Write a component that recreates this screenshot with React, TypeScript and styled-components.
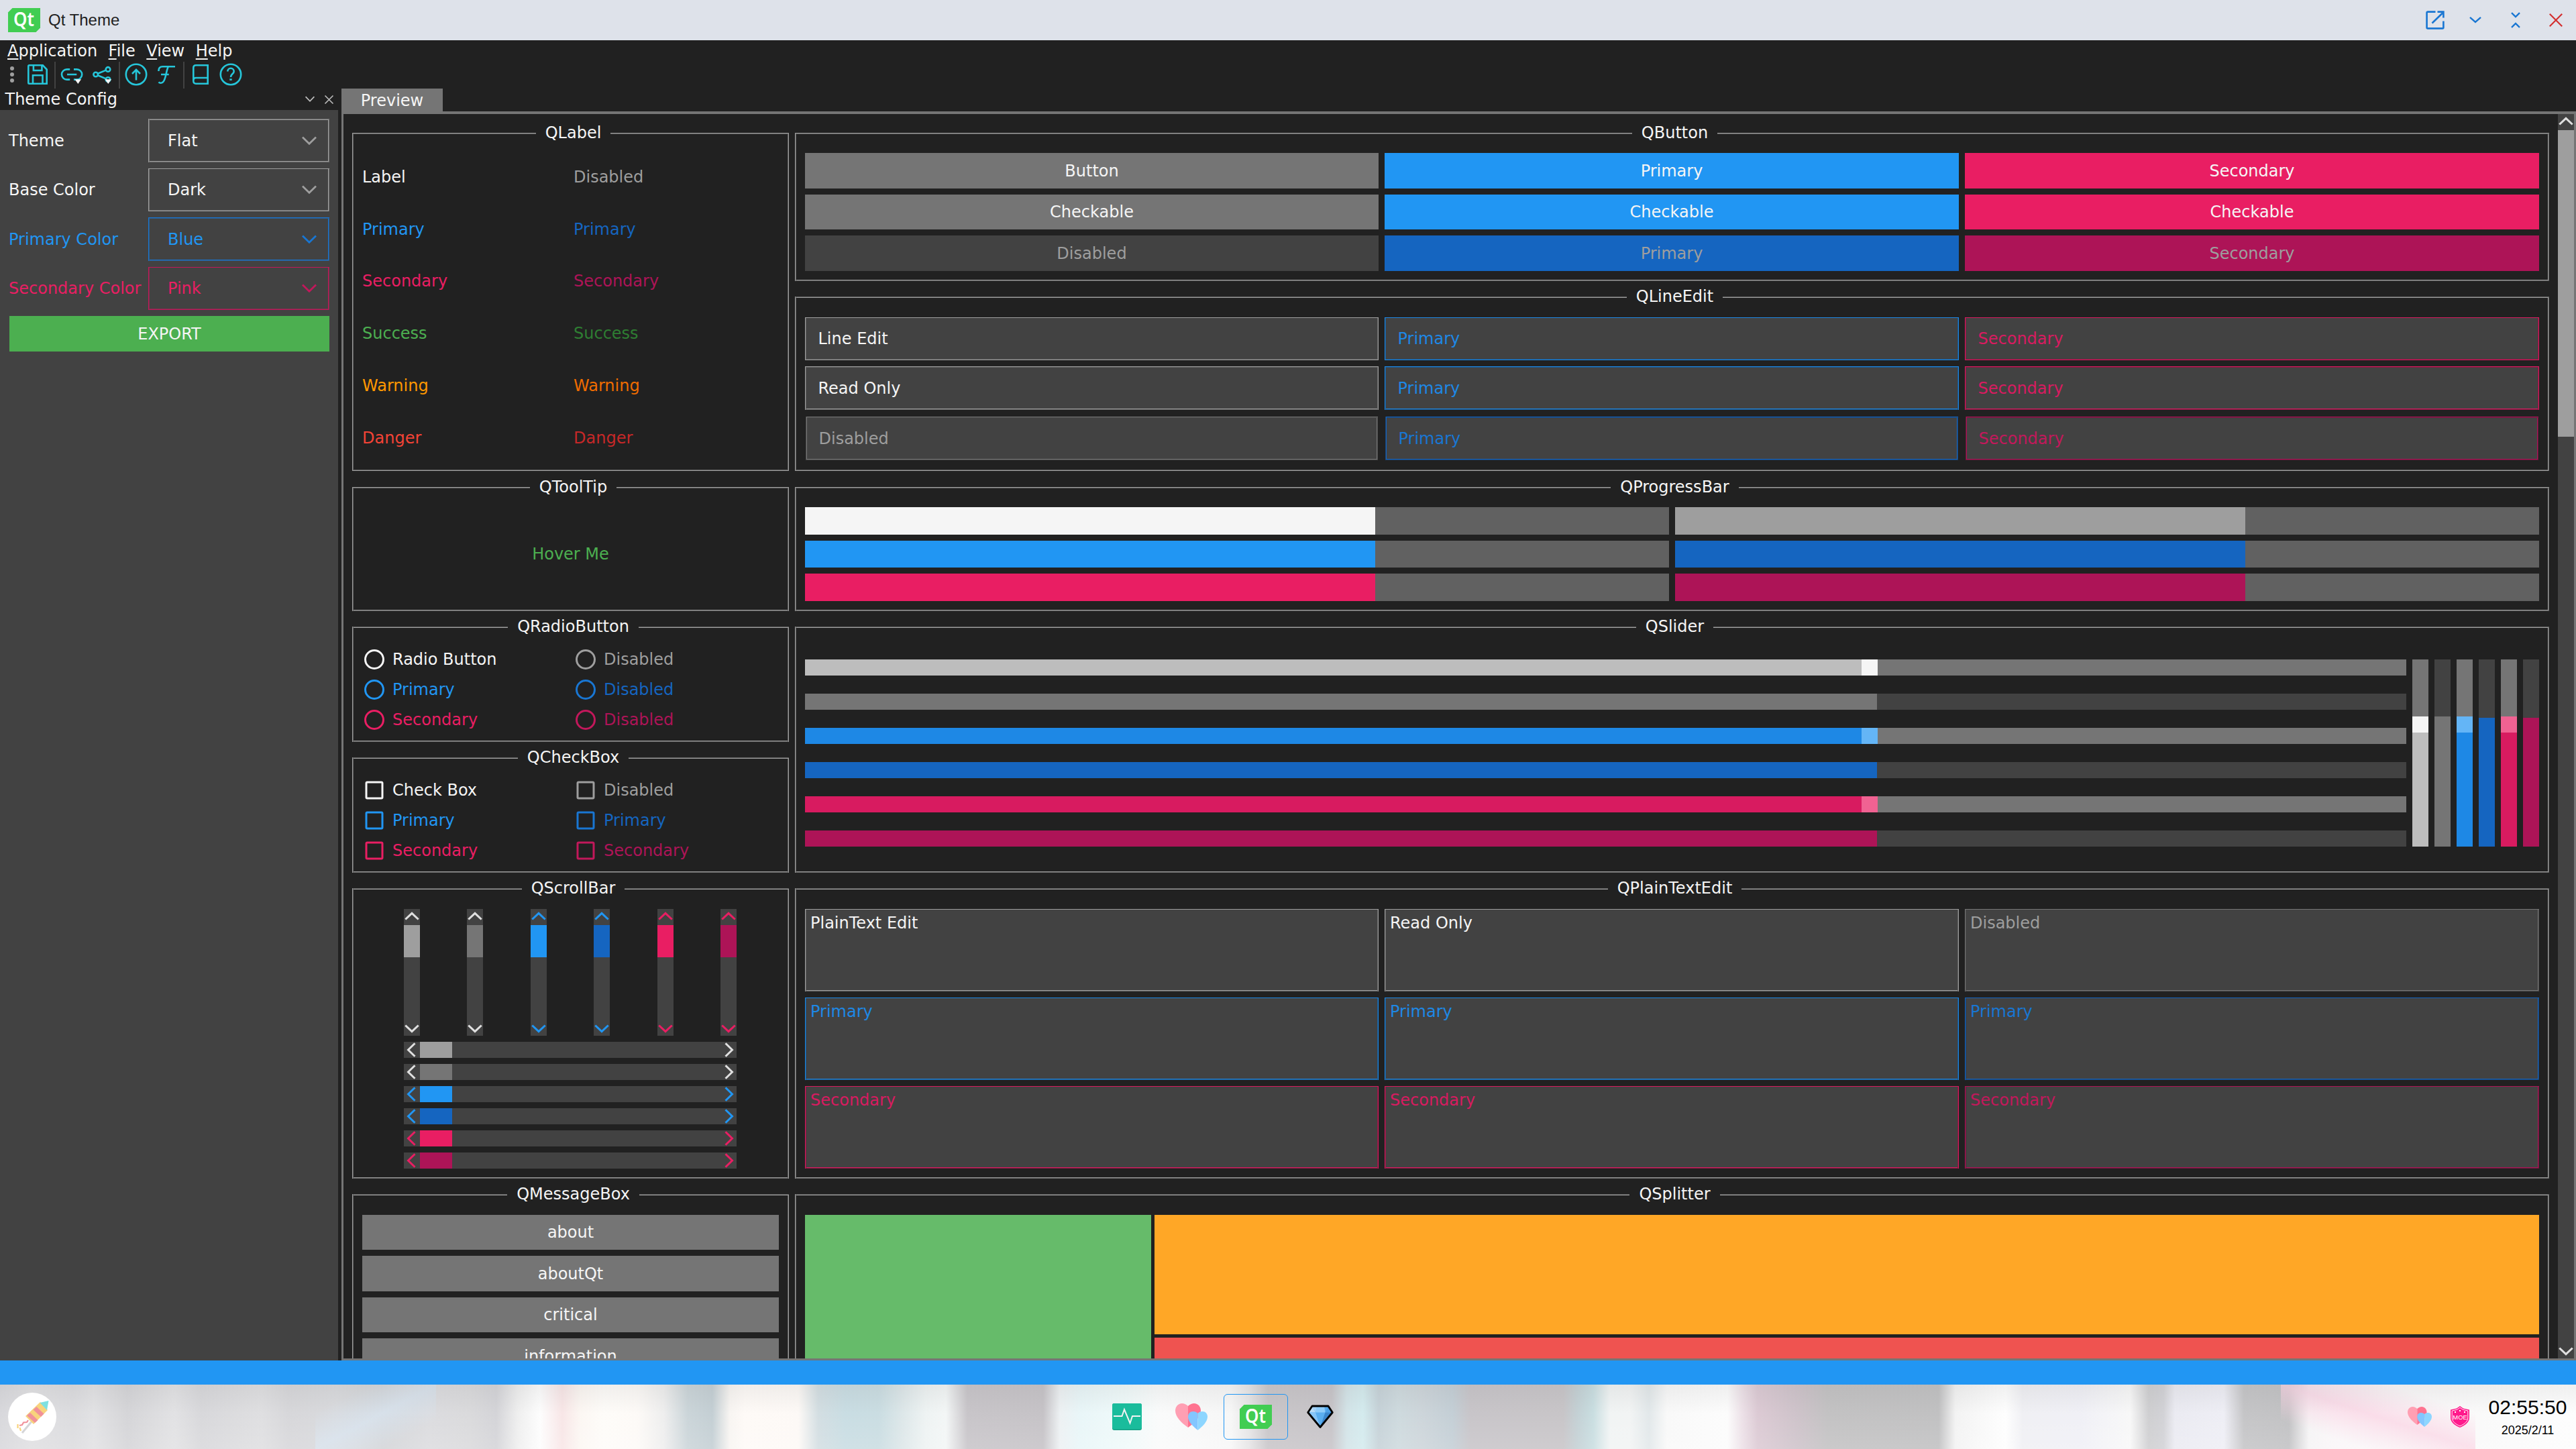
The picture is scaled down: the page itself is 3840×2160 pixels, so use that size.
import React from "react";
import styled, { createGlobalStyle, css } from "styled-components";

const c = {
  bg: "#212121",
  panel: "#424242",
  line: "#9e9e9e",
  grey: "#757575",
  text: "#f5f5f5",
  blue: "#2196f3",
  blueEdit: "#1e88e5",
  blueIcon: "#1976d2",
  blueDark: "#1565c0",
  pink: "#e91e63",
  pinkEdit: "#d81b60",
  pinkIcon: "#c2185b",
  pinkDark: "#ad1457",
  cyan: "#26c6da",
};

/* A hairline of one and a half pixels. Each edge (left, top, right, bottom) is
   "a": solid outside and faint inside, "b": the reverse, "c": one solid pixel. */
type Edges = string;
const hairline = (color: string, edges: Edges, under: string) => {
  const dim = `color-mix(in srgb, ${color} 50%, ${under})`;
  const dirs: [number, number][] = [[1, 0], [0, 1], [-1, 0], [0, -1]];
  const outer: string[] = [];
  const inner: string[] = [];
  dirs.forEach(([x, y], i) => {
    const kind = edges[i];
    outer.push(`inset ${x}px ${y}px 0 0 ${kind === "b" ? dim : color}`);
    if (kind !== "c") inner.push(`inset ${x * 2}px ${y * 2}px 0 0 ${kind === "b" ? color : dim}`);
  });
  return css`box-shadow: ${[...outer, ...inner].join(", ")};`;
};

const Global = createGlobalStyle`
  * { box-sizing: border-box; }
  body {
    margin: 0;
    background: ${c.bg};
    font-family: "DejaVu Sans", sans-serif;
    font-size: 24px;
    line-height: 28px;
    color: ${c.text};
    overflow: hidden;
  }
  svg { display: block; flex: none; overflow: visible; }
`;

const Screen = styled.div`
  width: 3840px;
  height: 2160px;
  display: flex;
  flex-direction: column;
  overflow: hidden;
  white-space: nowrap;
`;

/* ---------- title bar ---------- */
const TitleBar = styled.header`
  height: 60px;
  flex: none;
  display: flex;
  align-items: center;
  padding-left: 12px;
  background: #dee2ea;
  color: #212121;
  font-family: "Liberation Sans", Arial, sans-serif;
`;
const WindowTitle = styled.span`
  flex: 1;
  padding-left: 12px;
`;
const WindowButton = styled.span<{ $danger?: boolean }>`
  width: 60px;
  height: 60px;
  display: flex;
  align-items: center;
  justify-content: center;
  color: ${(p) => (p.$danger ? "#d32f2f" : "#1976d2")};
`;

const QtLogo = () => (
  <svg width="48" height="36" viewBox="0 0 48 36">
    <path d="M6.500 0H48V29.500L41.500 36H0V6.500Z" fill="#41cd52" />
    <text x="8" y="27" textLength="31" lengthAdjust="spacingAndGlyphs" fontFamily="'Noto Sans', 'Open Sans', sans-serif" fontWeight="600" fontSize="28" fill="#fff">Qt</text>
  </svg>
);

/* ---------- menu and tool bar ---------- */
const MenuBar = styled.nav`
  height: 32px;
  flex: none;
  display: flex;
  align-items: center;
  gap: 16.500px;
  padding-left: 11px;
`;
const Mnemonic = styled.span`
  text-decoration: underline;
  text-decoration-thickness: 2px;
  text-underline-offset: 3px;
  text-decoration-skip-ink: none;
`;
const ToolBar = styled.div`
  height: 40px;
  flex: none;
  display: flex;
  align-items: center;
  padding-bottom: 2px;
  color: ${c.cyan};
`;
const Grip = styled.span`
  width: 33.500px;
  display: flex;
  flex-direction: column;
  align-items: center;
  gap: 3px;
  padding-left: 2.500px;
`;
const GripDot = styled.span`
  width: 6px;
  height: 6px;
  border-radius: 50%;
  background: ${c.line};
`;
const ToolButton = styled.span`
  width: 45px;
  display: flex;
  justify-content: center;
`;
const ToolSeparator = styled.span`
  width: 2px;
  height: 40px;
  margin: 2px 1.500px 0 2.500px;
  background: ${c.panel};
`;
const ToolIcon = ({ children, menu }: { children: React.ReactNode; menu?: boolean }) => (
  <svg width="36" height="36" viewBox="0 0 36 36" fill="none" stroke="currentColor" strokeWidth="2.600">
    {children}
    {menu && <path d="M22.500 25.300H32L27.300 32Z" fill="#f5f5f5" stroke="none" />}
  </svg>
);

/* ---------- body ---------- */
const Body = styled.div`
  height: 1896px;
  flex: none;
  display: flex;
`;
const Dock = styled.aside`
  width: 504px;
  display: flex;
  flex-direction: column;
`;
const DockTitle = styled.div`
  height: 32px;
  display: flex;
  align-items: center;
  padding-left: 7.500px;
  margin-right: -1px;
  color: ${c.text};
`;
const DockName = styled.span`
  flex: 1;
`;
const DockIcon = styled.span`
  width: 29px;
  display: flex;
  justify-content: center;
  color: #bdbdbd;
`;
const DockBody = styled.div`
  flex: 1;
  background: ${c.panel};
  padding: 13px 13px 0 14px;
`;
const FormRow = styled.div<{ $h: number; $color: string }>`
  height: ${(p) => p.$h}px;
  margin-bottom: 9px;
  display: grid;
  grid-template-columns: 207px 270px;
  align-items: center;
  color: ${(p) => p.$color};
`;
const FormLabel = styled.span`
  margin-left: -1px;
`;
const Combo = styled.div<{ $line: string; $edges: Edges }>`
  height: 100%;
  display: flex;
  align-items: center;
  justify-content: space-between;
  padding: 0 19px 0 29px;
  ${(p) => hairline(p.$line, p.$edges, c.panel)}
`;
const ChevronIcon = styled.svg<{ $color: string }>`
  color: ${(p) => p.$color};
`;
const ExportButton = styled.div`
  height: 53px;
  display: flex;
  align-items: center;
  justify-content: center;
  background: #4caf50;
`;

const Main = styled.main`
  width: 3331px;
  margin-left: 5px;
  display: flex;
  flex-direction: column;
`;
const Tab = styled.div`
  width: 151px;
  height: 34px;
  display: flex;
  align-items: center;
  justify-content: center;
  padding-top: 2px;
  background: ${c.grey};
`;
const TabPane = styled.div`
  flex: 1;
  min-height: 0;
  display: flex;
  padding: 4px 3px 3px;
  background: ${c.grey};
`;
const Viewport = styled.div`
  flex: 1;
  min-height: 0;
  overflow: hidden;
  display: flex;
  gap: 9px;
  padding: 28px 13px 0;
  background: ${c.bg};
`;
const Column = styled.div<{ $w: number }>`
  width: ${(p) => p.$w}px;
  flex: none;
`;

/* ---------- group box ---------- */
const GroupFrame = styled.section<{ $h: number; $edges: Edges; $odd: boolean; $first?: boolean }>`
  height: ${(p) => p.$h}px;
  margin-top: ${(p) => (p.$first ? 0 : p.$odd ? 23 : 24)}px;
  padding: 0 15px 15px;
  display: flex;
  flex-direction: column;
  ${(p) => hairline(c.line, p.$edges, c.bg)}
`;
const Legend = styled.h2<{ $odd: boolean }>`
  margin: -14px 0 ${(p) => (p.$odd ? 17 : 16)}px 8px;
  padding: 0 14px;
  height: 28px;
  flex: none;
  align-self: center;
  background: ${c.bg};
  font: inherit;
`;
type GroupProps = { title: string; h: number; edges: Edges; first?: boolean; children: React.ReactNode };
const Group = ({ title, h, edges, first, children }: GroupProps) => {
  const odd = edges[1] === "b";
  return (
    <GroupFrame $h={h} $edges={edges} $odd={odd} $first={first}>
      <Legend $odd={odd}>{title}</Legend>
      {children}
    </GroupFrame>
  );
};

/* ---------- widgets ---------- */
const LabelGrid = styled.div`
  display: grid;
  grid-template: repeat(6, 77.800px) / 315px 306px;
  align-items: center;
  margin-top: -3px;
`;
const Label = styled.span<{ $color: string }>`
  color: ${(p) => p.$color};
`;
const HoverArea = styled.div`
  flex: 1;
  display: flex;
  align-items: center;
  justify-content: center;
  color: #4caf50;
`;
const OptionGrid = styled.div`
  display: grid;
  grid-template: repeat(3, 36px) / 315px 306px;
  row-gap: 9px;
`;
const Option = styled.span<{ $color: string; $mark: string }>`
  display: flex;
  align-items: center;
  gap: 9px;
  color: ${(p) => p.$color};
  svg { color: ${(p) => p.$mark}; }
`;
const RadioMark = () => (
  <svg width="36" height="36" viewBox="0 0 36 36"><circle cx="18" cy="18" r="13.500" fill="none" stroke="currentColor" strokeWidth="3" /></svg>
);
const CheckMark = () => (
  <svg width="36" height="36" viewBox="0 0 36 36"><rect x="6" y="6" width="24" height="24" rx="1.500" fill="none" stroke="currentColor" strokeWidth="3" /></svg>
);

const ScrollSamples = styled.div`
  width: 496px;
  margin-left: 62px;
  display: flex;
  flex-direction: column;
  gap: 9px;
`;
const VerticalSamples = styled.div`
  height: 189px;
  display: flex;
  justify-content: space-between;
`;
const ScrollTrack = styled.div<{ $vertical?: boolean; $color: string }>`
  width: ${(p) => (p.$vertical ? "24px" : "100%")};
  height: ${(p) => (p.$vertical ? "100%" : "24px")};
  display: flex;
  flex-direction: ${(p) => (p.$vertical ? "column" : "row")};
  background: ${c.panel};
  color: ${(p) => p.$color};
`;
const ScrollHandle = styled.div<{ $size: number; $color: string }>`
  flex: 0 0 ${(p) => p.$size}px;
  background: ${(p) => p.$color};
`;
const ScrollSpace = styled.div`
  flex: 1;
`;
const Arrow = ({ d }: { d: string }) => (
  <svg width="24" height="24" viewBox="0 0 24 24" fill="none" stroke="currentColor" strokeWidth="3"><path d={d} /></svg>
);
const UP = "M2.300 15.500L12 6.300L21.700 15.500";
const DOWN = "M2.300 8.500L12 17.700L21.700 8.500";
const LEFT = "M16.500 2.200L6.500 12L16.500 21.800";
const RIGHT = "M7.500 2.200L17.500 12L7.500 21.800";

const MainScroll = styled.div`
  width: 24px;
  display: flex;
  flex-direction: column;
  background: ${c.panel};
  color: #e0e0e0;
`;

const ButtonList = styled.div`
  display: grid;
  grid-template-rows: 52px 53px 52px 53px;
  gap: 9px;
`;
const ThreeColumns = styled.div<{ $rows: string }>`
  display: grid;
  grid-template-columns: 855px 856px 856px;
  grid-template-rows: ${(p) => p.$rows};
  gap: 9px;
`;
const Button = styled.div<{ $bg: string; $color?: string }>`
  display: flex;
  align-items: center;
  justify-content: center;
  background: ${(p) => p.$bg};
  color: ${(p) => p.$color ?? c.text};
`;
const LineEdit = styled.div<{ $color: string; $line: string; $edges: Edges; $inset?: boolean }>`
  margin: ${(p) => (p.$inset ? "1px" : "0")};
  display: flex;
  align-items: center;
  padding-left: 19.500px;
  background: ${c.panel};
  color: ${(p) => p.$color};
  ${(p) => hairline(p.$line, p.$edges, c.bg)}
`;
const TextEdit = styled(LineEdit)`
  align-items: flex-start;
  padding: 7px 0 0 8px;
`;
const ProgressGrid = styled.div`
  display: grid;
  grid-template-columns: 1288px 1288px;
  grid-template-rows: 41px 40px 41px;
  gap: 9px;
`;
const Progress = styled.div`
  display: flex;
  background: #616161;
`;
const ProgressFill = styled.div<{ $color: string }>`
  background: ${(p) => p.$color};
`;
const SliderArea = styled.div`
  display: flex;
  gap: 9px;
  height: 279px;
  margin-top: 18px;
`;
const SliderStack = styled.div`
  width: 2387px;
  display: flex;
  flex-direction: column;
  justify-content: space-between;
`;
const Slider = styled.div<{ $vertical?: boolean; $track: string }>`
  display: flex;
  flex-direction: ${(p) => (p.$vertical ? "column-reverse" : "row")};
  flex: none;
  ${(p) => (p.$vertical ? "width: 24px; height: 100%;" : "height: 24px;")}
  background: ${(p) => p.$track};
`;
const SliderPart = styled.div<{ $size: number; $color: string }>`
  flex: 0 0 ${(p) => p.$size}px;
  background: ${(p) => p.$color};
`;
const Splitter = styled.div`
  height: 400px;
  flex: none;
  display: grid;
  grid-template-columns: 516px 1fr;
  gap: 5px;
`;
const SplitterColumn = styled.div`
  display: grid;
  grid-template-rows: 178px 1fr;
  gap: 5px;
`;
const Fill = styled.div<{ $color: string }>`
  background: ${(p) => p.$color};
`;

/* ---------- status bar and task bar ---------- */
const StatusBar = styled.div`
  height: 36px;
  flex: none;
  background: ${c.blue};
`;
const wallpaper: [number, string][] = [
  [0, "#d8d8dc"], [45, "#e0e0e2"], [110, "#dcdcdf"], [140, "#e2e2e4"], [190, "#d5d5d8"], [260, "#e2e2e4"], [300, "#d8d8db"], [390, "#dfdfe1"],
  [430, "#d7d7da"], [500, "#d9dadd"], [570, "#d3d5d8"], [640, "#dcdcdf"], [700, "#dadadc"], [740, "#d4d4d8"], [772, "#efefef"],
  [805, "#fdfdfd"], [838, "#f8e6e7"], [865, "#fcf7f3"], [900, "#fefcf9"], [950, "#fdfaf7"], [990, "#eeeeee"], [1025, "#cbd5d9"], [1062, "#c4cfd4"],
  [1088, "#f8f5f2"], [1110, "#fefaf7"], [1190, "#fdf9f6"], [1220, "#d3dee2"], [1260, "#c9dde3"], [1310, "#cadde2"], [1345, "#dde7e9"],
  [1380, "#eef3f3"], [1410, "#f3f6f6"], [1442, "#c8c5c9"], [1555, "#c6c3c7"], [1580, "#edf1f3"], [1610, "#e9f6f8"], [1680, "#f0fafa"], [1730, "#fafbfb"],
  [1835, "#f7f7f7"], [1862, "#e6e5e6"], [1890, "#c9c6c9"], [1985, "#c7c4c8"], [2008, "#d3e4e8"], [2032, "#d4ebee"], [2055, "#c6d2d8"],
  [2085, "#cedade"], [2120, "#cdd5da"], [2165, "#c4cfd6"], [2192, "#c8c5c9"], [2330, "#c8c5c8"], [2352, "#c4d1d5"], [2375, "#c9dee1"],
  [2400, "#f1f4f4"], [2430, "#f2f4f4"], [2458, "#e2e8ea"], [2485, "#f9f9f9"], [2575, "#fcfcfc"], [2598, "#ece0e7"], [2620, "#dccad4"], [2680, "#cec3ca"],
  [2725, "#c3c2c3"], [2890, "#c1c1c2"], [2915, "#f3f3f3"], [2990, "#fefefe"], [3015, "#f0f0f4"], [3100, "#f0f0f6"], [3175, "#f8f8f8"], [3203, "#cfcfd1"],
  [3225, "#d2d2d6"], [3242, "#ebebf2"], [3315, "#eeeef5"], [3345, "#c5c5c7"], [3412, "#c2c2c4"], [3442, "#f5f4f5"], [3480, "#faf6f8"],
  [3700, "#fafafa"], [3840, "#fdfdfd"],
];
const TaskBar = styled.footer`
  height: 96px;
  flex: none;
  display: grid;
  grid-template-columns: 1fr auto 1fr;
  align-items: center;
  background:
    linear-gradient(to bottom, rgba(120, 120, 120, 0.1), rgba(255, 255, 255, 0) 45%, rgba(255, 255, 255, 0.12)),
    linear-gradient(to top right, rgba(250, 212, 228, 0) 22%, rgba(250, 212, 228, 0.75) 50%, rgba(250, 212, 228, 0) 78%) 3400px 0 / 290px 96px no-repeat,
    linear-gradient(to bottom right, rgba(216, 226, 236, 0) 22%, rgba(216, 226, 236, 0.9) 50%, rgba(216, 226, 236, 0) 78%) 470px 0 / 180px 96px no-repeat,
    linear-gradient(to right, ${wallpaper.map(([x, color]) => `${color} ${x}px`).join(", ")});
`;
const StartArea = styled.div`
  padding-left: 12px;
`;
const Tasks = styled.div`
  display: flex;
  align-items: center;
  padding-right: 192px;
`;
const Task = styled.div<{ $active?: boolean }>`
  width: 96px;
  height: 68px;
  display: flex;
  align-items: center;
  justify-content: center;
  border: 1px solid ${(p) => (p.$active ? "#2196f3" : "transparent")};
  border-radius: 6px;
`;
const Tray = styled.div`
  display: flex;
  align-items: center;
  justify-content: flex-end;
  gap: 27px;
`;
const Clock = styled.div`
  width: 144px;
  margin-left: -13px;
  display: flex;
  flex-direction: column;
  align-items: center;
  color: #000;
  font-family: "Liberation Sans", Arial, sans-serif;
`;
const Time = styled.span`
  font-size: 30px;
  line-height: 34px;
`;
const DateText = styled.span`
  font-size: 18px;
  line-height: 22px;
  margin-top: 6px;
`;

const Hearts = ({ w }: { w: number }) => (
  <svg width={w} height={(w * 40) / 48} viewBox="0 0 48 40">
    <path d="M19 4C16 1.200 13 0 10 0C4 0 0 5 0 11C0 20 9 29 19 36Z" fill="#ff9fb3" />
    <path d="M19 4C22 1.200 25 0 28 0C34 0 38 5 38 11C38 20 29 29 19 36Z" fill="#ff7390" />
    <path d="M33.500 14.800C31 12.600 29 12 26.700 12C22 12 19 15.500 19 20C19 27 26 34 33.500 40Z" fill="#83c6ff" />
    <path d="M33.500 14.800C36 12.600 38 12 40.300 12C45 12 48 15.500 48 20C48 27 41 34 33.500 40Z" fill="#8dd6ff" />
  </svg>
);
const Firework = () => (
  <svg width="72" height="72" viewBox="0 0 72 72">
    <circle cx="36" cy="36" r="36" fill="#fff" />
    <path d="M36 42L21 60" stroke="#d5d5d8" strokeWidth="3" />
    <path d="M48 14L59 26L38 47L26 35Z" fill="#f8d37c" />
    <path d="M42.500 21L53.500 31.500L49 36L37.500 25.500Z" fill="#f0919a" />
    <path d="M33 30L44.500 41L40 45L28 34Z" fill="#f0919a" />
    <path d="M60.500 12L47.500 15L58 26Z" fill="#7fe0e0" />
    <path d="M30 41L28 44L23 44.500L21 48L17 49" fill="none" stroke="#f0919a" strokeWidth="2.200" />
    <path d="M14.500 47V53M17.500 52L19 57" stroke="#f8d37c" strokeWidth="2.200" />
  </svg>
);
const Pulse = () => (
  <svg width="44" height="40" viewBox="0 0 44 40">
    <rect width="44" height="40" rx="3" fill="#16a085" />
    <path d="M3 0H41A3 3 0 0 1 44 3V35.500A3 3 0 0 1 41 38.500H3A3 3 0 0 1 0 35.500V3A3 3 0 0 1 3 0Z" fill="#1abc9c" />
    <path d="M2 19H14.500L18 9L26.500 29.500L30 19H42" fill="none" stroke="#f2f2f2" strokeWidth="2" />
  </svg>
);
const Diamond = () => (
  <svg width="40" height="36" viewBox="0 0 40 36">
    <path d="M8 2H32L38.300 11.500L20 33.500L1.700 11.500Z" fill="#5aaef0" />
    <path d="M8 2L13 11.500H1.700Z" fill="#b9dcf8" />
    <path d="M8 2H16L13 11.500Z" fill="#a5d3f8" />
    <path d="M15 2H26L27.500 11.500H13Z" fill="#8fccfa" />
    <path d="M32 2L27.500 11.500H38.300Z" fill="#4d9fe6" />
    <path d="M1.700 11.500H13L20 33.500Z" fill="#86c5f8" />
    <path d="M27.500 11.500H38.300L20 33.500Z" fill="#3c86cc" />
    <path d="M8 2H32L38.300 11.500L20 33.500L1.700 11.500Z" fill="none" stroke="#000" strokeWidth="2.800" strokeLinejoin="round" />
  </svg>
);
const Shield = () => (
  <svg width="30" height="32" viewBox="0 0 30 32">
    <path d="M15 0L20 3.500L29 5.500V17C29 24.500 23 28.500 15 32C7 28.500 1 24.500 1 17V5.500L10 3.500Z" fill="#ff1a8c" />
    <path d="M15 2.300L19.500 5.300L26.800 7V17C26.800 23 22 26.800 15 29.800C8 26.800 3.200 23 3.200 17V7L10.500 5.300Z" fill="none" stroke="#fff" strokeWidth="0.900" />
    <path d="M7 8h2v2h-2zM14 6h2v2h-2zM21 8h2v2h-2z" fill="#fff" />
    <text x="4.300" y="20" textLength="21.500" lengthAdjust="spacingAndGlyphs" fontFamily="'Liberation Sans', sans-serif" fontSize="9" fill="#fff">MOE</text>
  </svg>
);

const Chevron = ({ color }: { color: string }) => (
  <ChevronIcon $color={color} width="22" height="14" viewBox="0 0 22 14" fill="none" stroke="currentColor" strokeWidth="2.800">
    <path d="M1 1.500L11 11.300L21 1.500" />
  </ChevronIcon>
);

const menus = ["Application", "File", "View", "Help"];
const form = [
  { name: "Theme", value: "Flat", color: c.text, line: c.line, h: 65, edges: "abbb" },
  { name: "Base Color", value: "Dark", color: c.text, line: c.line, h: 64, edges: "acba" },
  { name: "Primary Color", value: "Blue", color: c.blue, line: c.blueIcon, h: 65, edges: "aabb" },
  { name: "Secondary Color", value: "Pink", color: c.pink, line: c.pinkIcon, h: 64, edges: "acba" },
];
const labels: [string, string, string, string][] = [
  ["Label", c.text, "Disabled", c.line],
  ["Primary", c.blue, "Primary", c.blueDark],
  ["Secondary", c.pink, "Secondary", c.pinkDark],
  ["Success", "#4caf50", "Success", "#2e7d32"],
  ["Warning", "#ff9800", "Warning", "#ef6c00"],
  ["Danger", "#f44336", "Danger", "#c62828"],
];
const option = [
  { color: c.text, offMark: c.line, off: c.line },
  { color: c.blue, offMark: c.blueIcon, off: c.blueDark },
  { color: c.pink, offMark: c.pinkIcon, off: c.pinkDark },
];
const bars = [
  { arrow: "#e0e0e0", handle: c.line },
  { arrow: "#e0e0e0", handle: c.grey },
  { arrow: c.blue, handle: c.blue },
  { arrow: c.blue, handle: c.blueDark },
  { arrow: c.pink, handle: c.pink },
  { arrow: c.pink, handle: c.pinkDark },
];
const buttons: [string, string, string?][] = [
  ["Button", c.grey], ["Primary", c.blue], ["Secondary", c.pink],
  ["Checkable", c.grey], ["Checkable", c.blue], ["Checkable", c.pink],
  ["Disabled", c.panel, c.line], ["Primary", c.blueDark, c.line], ["Secondary", c.pinkDark, c.line],
];
const lineEdits: [string, string, string][] = [
  ["Line Edit", c.text, c.line], ["Primary", c.blueEdit, c.blueEdit], ["Secondary", c.pinkEdit, c.pinkEdit],
  ["Read Only", c.text, c.line], ["Primary", c.blueEdit, c.blueEdit], ["Secondary", c.pinkEdit, c.pinkEdit],
  ["Disabled", c.line, c.grey], ["Primary", c.blueIcon, c.blueDark], ["Secondary", c.pinkIcon, c.pinkDark],
];
const textEdits: [string, string, string][] = [
  ["PlainText Edit", c.text, c.line], ["Read Only", c.text, c.line], ["Disabled", c.line, c.grey],
  ["Primary", c.blueEdit, c.blueEdit], ["Primary", c.blueEdit, c.blueEdit], ["Primary", c.blueIcon, c.blueDark],
  ["Secondary", c.pinkEdit, c.pinkEdit], ["Secondary", c.pinkEdit, c.pinkEdit], ["Secondary", c.pinkIcon, c.pinkDark],
];
const progress = ["#f5f5f5", c.line, c.blue, c.blueDark, c.pink, c.pinkDark];
const sliders = [
  { track: c.grey, fill: "#bdbdbd", handle: "#f5f5f5" },
  { track: c.panel, fill: c.grey, drop: 0 },
  { track: c.grey, fill: c.blueEdit, handle: "#64b5f6" },
  { track: c.panel, fill: c.blueDark, drop: 2 },
  { track: c.grey, fill: c.pinkEdit, handle: "#f06292" },
  { track: c.panel, fill: c.pinkDark, drop: 2 },
];

export default function App() {
  return (
    <Screen>
      <Global />
      <TitleBar>
        <QtLogo />
        <WindowTitle>Qt Theme</WindowTitle>
        <WindowButton>
          <svg width="30" height="30" viewBox="0 0 30 30" fill="none" stroke="currentColor" strokeWidth="2.600">
            <path d="M15.500 2.600H4Q2.600 2.600 2.600 4V26Q2.600 27.400 4 27.400H26Q27.400 27.400 27.400 26V16.500M10.500 19.500L26 4.500M18.500 2.600H27.400V11.500" />
          </svg>
        </WindowButton>
        <WindowButton>
          <svg width="18" height="12" viewBox="0 0 18 12" fill="none" stroke="currentColor" strokeWidth="2.400"><path d="M1 1.800L9 8.800L17 1.800" /></svg>
        </WindowButton>
        <WindowButton>
          <svg width="14" height="26" viewBox="0 0 14 26" fill="none" stroke="currentColor" strokeWidth="2.400"><path d="M1 2.200L7 8L13 2.200M1 23.800L7 18L13 23.800" /></svg>
        </WindowButton>
        <WindowButton $danger>
          <svg width="20" height="20" viewBox="0 0 20 20" fill="none" stroke="currentColor" strokeWidth="2.200"><path d="M0.800 0.800L19.200 19.200M19.200 0.800L0.800 19.200" /></svg>
        </WindowButton>
      </TitleBar>
      <MenuBar>
        {menus.map((m) => (
          <span key={m}><Mnemonic>{m[0]}</Mnemonic>{m.slice(1)}</span>
        ))}
      </MenuBar>
      <ToolBar>
        <Grip><GripDot /><GripDot /><GripDot /></Grip>
        <ToolButton>
          <ToolIcon><path d="M5.500 4.300H25.800L31.700 10.500V31.700H5.500Q4.300 31.700 4.300 30.500V5.500Q4.300 4.300 5.500 4.300ZM11 31.700V19.300H25.500V31.700M11.900 4.300V12H24.400V4.300" /></ToolIcon>
        </ToolButton>
        <ToolSeparator />
        <ToolButton>
          <ToolIcon menu><path d="M15.200 10.400H10.600A7.600 7.600 0 0 0 10.600 25.600H15.200M21 10.400H25.600A7.600 7.600 0 0 1 25.600 25.600H21M11 18H25.300" /></ToolIcon>
        </ToolButton>
        <ToolButton>
          <ToolIcon menu>
            <circle cx="8.700" cy="18" r="3.300" /><circle cx="27" cy="10.400" r="3.300" /><circle cx="27" cy="25.600" r="3.300" />
            <path d="M11.700 16.700L24 11.600M11.700 19.300L24 24.400" />
          </ToolIcon>
        </ToolButton>
        <ToolSeparator />
        <ToolButton>
          <ToolIcon><circle cx="18" cy="18" r="15.200" /><path d="M18 26.500V10.500M12 17L18 10.800L24 17" /></ToolIcon>
        </ToolButton>
        <ToolButton>
          <ToolIcon><path d="M6.500 13C6.200 8.500 8.500 6.200 12.500 6.200H31M21 6.200C17.500 12 17.500 25.500 13 29.300C11 31 8 31 6.500 29.300M10 18H21.700" /></ToolIcon>
        </ToolButton>
        <ToolSeparator />
        <ToolButton>
          <ToolIcon><path d="M7.300 27.500V8Q7.300 4.300 11 4.300H28.700V31.700H11Q7.300 31.700 7.300 27.500Q7.300 23 11 23H28.700" /></ToolIcon>
        </ToolButton>
        <ToolButton>
          <ToolIcon><circle cx="18" cy="18" r="15.200" /><path d="M13.300 13.500A4.700 4.700 0 0 1 22.700 13.500C22.700 17 18 17.300 18 22" /><path d="M16.300 25.600H19.700" /></ToolIcon>
        </ToolButton>
      </ToolBar>
      <Body>
        <Dock>
          <DockTitle>
            <DockName>Theme Config</DockName>
            <DockIcon><svg width="14" height="10" viewBox="0 0 14 10" fill="none" stroke="currentColor" strokeWidth="1.800"><path d="M0.600 1.200L7 7.800L13.400 1.200" /></svg></DockIcon>
            <DockIcon><svg width="13" height="13" viewBox="0 0 13 13" fill="none" stroke="currentColor" strokeWidth="1.600"><path d="M0.500 0.500L12.500 12.500M12.500 0.500L0.500 12.500" /></svg></DockIcon>
          </DockTitle>
          <DockBody>
            {form.map((f) => (
              <FormRow key={f.name} $h={f.h} $color={f.color}>
                <FormLabel>{f.name}</FormLabel>
                <Combo $line={f.line} $edges={f.edges}>
                  <span>{f.value}</span>
                  <Chevron color={f.line} />
                </Combo>
              </FormRow>
            ))}
            <ExportButton>EXPORT</ExportButton>
          </DockBody>
        </Dock>
        <Main>
          <Tab>Preview</Tab>
          <TabPane>
            <Viewport>
              <Column $w={651}>
                <Group title="QLabel" h={504} edges="aaaa" first>
                  <LabelGrid>
                    {labels.map(([a, ca, b, cb]) => (
                      <React.Fragment key={a}><Label $color={ca}>{a}</Label><Label $color={cb}>{b}</Label></React.Fragment>
                    ))}
                  </LabelGrid>
                </Group>
                <Group title="QToolTip" h={185} edges="aaab"><HoverArea>Hover Me</HoverArea></Group>
                <Group title="QRadioButton" h={172} edges="abab">
                  <OptionGrid>
                    {option.map((o, i) => (
                      <React.Fragment key={i}>
                        <Option $color={o.color} $mark={o.color}><RadioMark />{["Radio Button", "Primary", "Secondary"][i]}</Option>
                        <Option $color={o.off} $mark={o.offMark}><RadioMark />Disabled</Option>
                      </React.Fragment>
                    ))}
                  </OptionGrid>
                </Group>
                <Group title="QCheckBox" h={172} edges="abab">
                  <OptionGrid>
                    {option.map((o, i) => (
                      <React.Fragment key={i}>
                        <Option $color={o.color} $mark={o.color}><CheckMark />{["Check Box", "Primary", "Secondary"][i]}</Option>
                        <Option $color={o.off} $mark={o.offMark}><CheckMark />{["Disabled", "Primary", "Secondary"][i]}</Option>
                      </React.Fragment>
                    ))}
                  </OptionGrid>
                </Group>
                <Group title="QScrollBar" h={433} edges="abab">
                  <ScrollSamples>
                    <VerticalSamples>
                      {bars.map((b, i) => (
                        <ScrollTrack key={i} $vertical $color={b.arrow}>
                          <Arrow d={UP} /><ScrollHandle $size={48} $color={b.handle} /><ScrollSpace /><Arrow d={DOWN} />
                        </ScrollTrack>
                      ))}
                    </VerticalSamples>
                    {bars.map((b, i) => (
                      <ScrollTrack key={i} $color={b.arrow}>
                        <Arrow d={LEFT} /><ScrollHandle $size={48} $color={b.handle} /><ScrollSpace /><Arrow d={RIGHT} />
                      </ScrollTrack>
                    ))}
                  </ScrollSamples>
                </Group>
                <Group title="QMessageBox" h={500} edges="abab">
                  <ButtonList>
                    {["about", "aboutQt", "critical", "information"].map((t) => <Button key={t} $bg={c.grey}>{t}</Button>)}
                  </ButtonList>
                </Group>
              </Column>
              <Column $w={2615}>
                <Group title="QButton" h={221} edges="aabb" first>
                  <ThreeColumns $rows="53px 52px 53px">
                    {buttons.map(([t, bg, color], i) => <Button key={i} $bg={bg} $color={color}>{t}</Button>)}
                  </ThreeColumns>
                </Group>
                <Group title="QLineEdit" h={260} edges="abba">
                  <ThreeColumns $rows="64px 65px 67px">
                    {lineEdits.map(([t, color, line], i) => (
                      <LineEdit key={i} $color={color} $line={line} $inset={i > 5} $edges={i > 5 ? "babb" : (i < 3 ? "acaa" : "aaab")}>{t}</LineEdit>
                    ))}
                  </ThreeColumns>
                </Group>
                <Group title="QProgressBar" h={185} edges="aabb">
                  <ProgressGrid>
                    {progress.map((p) => (
                      <Progress key={p}><ProgressFill $color={p} style={{ width: "66%" }} /></Progress>
                    ))}
                  </ProgressGrid>
                </Group>
                <Group title="QSlider" h={367} edges="abbb">
                  <SliderArea>
                    <SliderStack>
                      {sliders.map((s, i) => (
                        <Slider key={i} $track={s.track}>
                          <SliderPart $size={s.handle ? 1575 : 1598} $color={s.fill} />
                          {s.handle && <SliderPart $size={24} $color={s.handle} />}
                        </Slider>
                      ))}
                    </SliderStack>
                    {sliders.map((s, i) => (
                      <Slider key={i} $vertical $track={s.track}>
                        <SliderPart $size={s.handle ? 170 : 194 - (s.drop ?? 0)} $color={s.fill} />
                        {s.handle && <SliderPart $size={24} $color={s.handle} />}
                      </Slider>
                    ))}
                  </SliderArea>
                </Group>
                <Group title="QPlainTextEdit" h={433} edges="abbb">
                  <ThreeColumns $rows="123px 123px 123px">
                    {textEdits.map(([t, color, line], i) => (
                      <TextEdit key={i} $color={color} $line={line} $edges={i % 3 === 2 ? "acbb" : "acab"}>{t}</TextEdit>
                    ))}
                  </ThreeColumns>
                </Group>
                <Group title="QSplitter" h={500} edges="abbb">
                  <Splitter>
                    <Fill $color="#66bb6a" />
                    <SplitterColumn><Fill $color="#ffa726" /><Fill $color="#ef5350" /></SplitterColumn>
                  </Splitter>
                </Group>
              </Column>
            </Viewport>
            <MainScroll>
              <Arrow d={UP} /><ScrollHandle $size={457} $color={c.line} /><ScrollSpace /><Arrow d={DOWN} />
            </MainScroll>
          </TabPane>
        </Main>
      </Body>
      <StatusBar />
      <TaskBar>
        <StartArea><Firework /></StartArea>
        <Tasks>
          <Task><Pulse /></Task>
          <Task><Hearts w={48} /></Task>
          <Task $active><QtLogo /></Task>
          <Task><Diamond /></Task>
        </Tasks>
        <Tray>
          <Hearts w={36} />
          <Shield />
          <Clock><Time>02:55:50</Time><DateText>2025/2/11</DateText></Clock>
        </Tray>
      </TaskBar>
    </Screen>
  );
}
